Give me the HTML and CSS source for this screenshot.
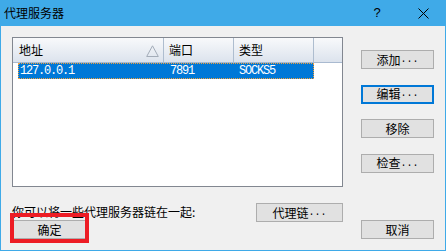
FILE: index.html
```html
<!DOCTYPE html>
<html lang="zh-CN">
<head>
<meta charset="utf-8">
<title>代理服务器</title>
<link rel="stylesheet" href="styles.css">
</head>
<body>
<div class="window">
  <div class="titlebar">
    <span class="title">代理服务器</span>
    <span class="ctrl help">?</span>
    <span class="ctrl close"><svg width="11" height="11" viewBox="0 0 11 11"><path d="M0.5 0.5 L10.5 10.5 M10.5 0.5 L0.5 10.5" stroke="#000" stroke-width="1" fill="none"/></svg></span>
  </div>
  <div class="content">
    <div class="main">
      <div class="listbox">
        <div class="header">
          <div class="hcell c1"><span>地址</span><svg class="sort" width="13" height="12" viewBox="0 0 13 12"><polygon points="6.5,0.8 12.3,11.5 0.7,11.5" fill="none" stroke="#a3acb8" stroke-width="1"/></svg></div>
          <div class="hcell c2">端口</div>
          <div class="hcell c3">类型</div>
          <div class="hcell fill"></div>
        </div>
        <div class="row selected">
          <div class="cell r1">127.0.0.1</div>
          <div class="cell r2">7891</div>
          <div class="cell r3">SOCKS5</div>
        </div>
      </div>
      <div class="side">
        <button class="btn">添加<span class="dots">...</span></button>
        <button class="btn default">编辑<span class="dots">...</span></button>
        <button class="btn">移除</button>
        <button class="btn">检查<span class="dots">...</span></button>
      </div>
    </div>
    <div class="chain">
      <span class="hint">你可以将一些代理服务器链在一起:</span>
      <button class="btn chain-btn">代理链<span class="dots">...</span></button>
    </div>
    <div class="footer">
      <button class="btn ok">确定</button>
      <button class="btn">取消</button>
    </div>
  </div>
  <div class="highlight"></div>
</div>
</body>
</html>
```
FILE: styles.css
```css
* { box-sizing: border-box; }
html, body {
  margin: 0;
  padding: 0;
  background: #f0f0f0;
}
body {
  font-family: "Noto Sans CJK SC", "Liberation Sans", sans-serif;
  font-size: 12px;
  line-height: 14px;
  color: #000;
}
.window {
  position: relative;
  width: 446px;
  height: 251px;
  display: flex;
  flex-direction: column;
}
.titlebar {
  height: 26px;
  background: #3faae8;
  display: flex;
  align-items: center;
  flex: none;
}
.title {
  padding-left: 4px;
  font-size: 12px;
  flex: 1;
}
.ctrl {
  width: 46px;
  height: 26px;
  display: flex;
  align-items: center;
  justify-content: center;
}
.help {
  font-family: "Liberation Sans", sans-serif;
  font-size: 13px;
}
.close svg { display: block; }
.content {
  flex: 1;
  border: 1px solid #3faae8;
  border-top: none;
  background: #f0f0f0;
  padding: 11px 11px 0 11px;
  display: flex;
  flex-direction: column;
}
.main {
  display: flex;
}
.listbox {
  width: 331px;
  height: 150px;
  border: 1px solid #828790;
  background: #fff;
}
.header {
  display: flex;
  height: 25px;
  border-bottom: 1px solid #a9bad0;
  background: linear-gradient(#f8f9fb, #dce3ed);
}
.hcell {
  height: 24px;
  display: flex;
  align-items: center;
  border-right: 1px solid #aebdcf;
  padding-left: 5px;
}
.hcell.c1 { width: 151px; padding-left: 6px; justify-content: space-between; padding-right: 4px; }
.hcell.c2 { width: 70px; }
.hcell.c3 { width: 80px; }
.hcell.fill { flex: 1; border-right: none; }
.sort { display: block; margin-top: 1px; }
.row {
  display: flex;
  height: 16px;
  width: 296px;
  margin-left: 5px;
  font-family: "Liberation Mono", monospace;
  font-size: 12px;
  letter-spacing: -1.2px;
  line-height: 16px;
}
.row.selected {
  background: #0078d7;
  color: #fff;
  outline: 1px dotted #f2a03a;
  outline-offset: -1px;
}
.cell { white-space: nowrap; }
.cell.r1 { width: 146px; padding-left: 2px; }
.cell.r2 { width: 70px; padding-left: 6px; }
.cell.r3 { width: 80px; padding-left: 5px; }
.side {
  margin-left: 18px;
  width: 73px;
  padding-top: 13px;
  display: flex;
  flex-direction: column;
  gap: 15.5px;
}
.btn {
  height: 19px;
  width: 73px;
  background: #e1e1e1;
  border: 1px solid #adadad;
  font-family: "Noto Sans CJK SC", sans-serif;
  font-size: 12px;
  line-height: 14px;
  color: #000;
  padding: 0;
  margin: 0;
  display: flex;
  align-items: center;
  justify-content: center;
}
.btn.default {
  border: 2px solid #0078d7;
}
.dots {
  font-family: "Liberation Mono", monospace;
  font-size: 10px;
  letter-spacing: 0;
  align-self: flex-end;
  line-height: 14px;
  padding-bottom: 1px;
}
.chain {
  margin-top: 16px;
  width: 331px;
  display: flex;
  justify-content: space-between;
  align-items: center;
}
.hint {
  line-height: 14px;
  padding-bottom: 1px;
}
.chain-btn { width: 87px; }
.footer {
  margin-top: -2px;
  display: flex;
  justify-content: space-between;
}
.btn.ok { margin-left: 1px; }
.highlight {
  position: absolute;
  left: 10px;
  top: 213px;
  width: 79px;
  height: 30px;
  border: 4px solid #ed1c24;
  pointer-events: none;
}
```
